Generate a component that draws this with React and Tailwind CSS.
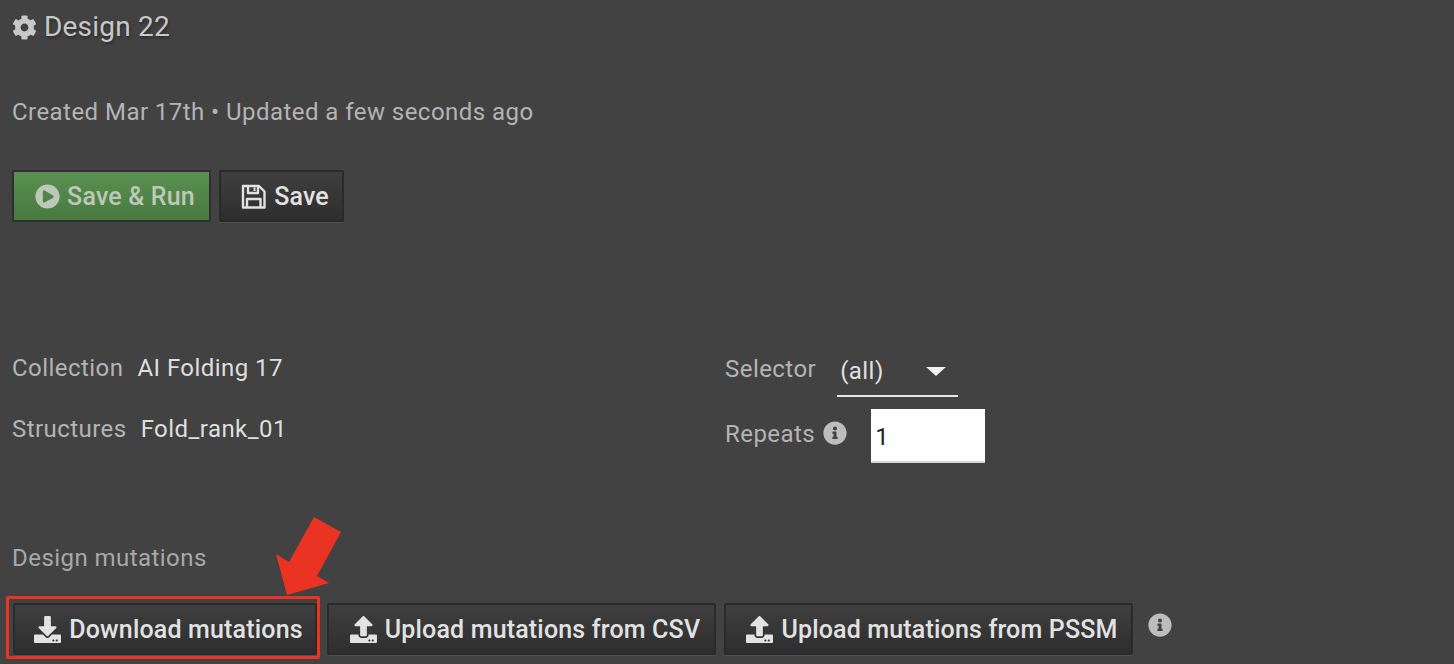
import React from 'react';
import { FaCog, FaPlayCircle, FaDownload, FaUpload, FaInfoCircle } from 'react-icons/fa';

const darkButton = 'flex h-[52px] items-center justify-center gap-2 rounded-[2px] border-2 border-[#2a2a2a] bg-gradient-to-b from-[#3f3f3f] to-[#2e2e2e] pl-[7px] text-[25px] font-medium tracking-[0.17px] text-[#e2e2e2] shadow-[0_1px_1px_rgba(255,255,255,0.08)]';

const Field = ({ label, children, className }) => (
  <div className={`flex items-center ${className}`}>
    <span className="text-[#b4b4b4]">{label}</span>
    {children}
  </div>
);

const SaveIcon = () => (
  <svg className="h-[25px] w-[25px]" viewBox="0 0 25 25" fill="none" stroke="currentColor" strokeWidth="2.4" strokeLinejoin="round">
    <path d="M2 2H18L23.5 7.5V23.5H2Z" />
    <path d="M7 2V9H17V2" />
    <path d="M6 23.5V15H19.5V23.5" />
    <path d="M13.5 3.5V7" strokeWidth="2" />
  </svg>
);

const App = () => {
  return (
    <div className="h-[664px] w-[1454px] overflow-hidden bg-[#424242] pl-3 font-['Roboto',sans-serif] text-[24px] leading-none tracking-[0.45px]">
      <h1 className="flex h-[54px] items-center gap-[7px] text-[28px] font-normal tracking-[0.2px] text-[#c8c8c8] [text-shadow:1px_2px_3px_rgba(0,0,0,0.35)]">
        <FaCog className="h-[25px] w-[25px]" />
        Design 22
      </h1>

      <p className="mt-[46px] text-[#b4b4b4]">Created Mar 17th • Updated a few seconds ago</p>

      <div className="mt-[46px] flex gap-2">
        <button className="flex h-[52px] w-[199px] items-center justify-center gap-[7px] rounded-[2px] border-2 border-[#2f2f2f] bg-gradient-to-b from-[#5a9152] to-[#49793f] pl-[7px] text-[25px] font-medium tracking-[0.17px] text-[#bcc9b8]">
          <FaPlayCircle className="h-[25px] w-[25px]" />
          Save &amp; Run
        </button>
        <button className={`${darkButton} w-[125px]`}>
          <SaveIcon />
          Save
        </button>
      </div>

      <div className="mt-[130px] grid grid-cols-[713px_1fr]">
        <div className="flex flex-col gap-[37px] pt-[4px]">
          <Field label="Collection">
            <span className="ml-[14px] text-[#dedede]">AI Folding 17</span>
          </Field>
          <Field label="Structures">
            <span className="ml-[14px] text-[#dedede]">Fold_rank_01</span>
          </Field>
        </div>
        <div className="flex flex-col gap-[19px]">
          <Field label="Selector" className="h-[34px]">
            <div className="ml-[21px] flex h-[50px] w-[121px] translate-y-[3px] items-center border-b-2 border-[#e6e6e6] pl-[3px] text-[#e0e0e0]">
              (all)
              <span className="ml-auto mr-[12px] h-0 w-0 border-x-[10px] border-t-[9px] border-x-transparent border-t-[#f0f0f0]" />
            </div>
          </Field>
          <Field label="Repeats">
            <FaInfoCircle className="ml-2 h-6 w-6 -translate-y-[1px] text-[#bdbdbd]" />
            <input
              readOnly
              value="1"
              className="ml-[24px] mt-[4px] h-[54px] w-[114px] border-b-2 border-[#d8d8d8] bg-white pl-[4px] pt-[3px] text-[24px] text-[#222]"
            />
          </Field>
        </div>
      </div>

      <p className="mt-[83px] text-[#a8a8a8]">Design mutations</p>

      <div className="relative mt-[26px] flex items-end">
        <div className="-ml-[6px] rounded-[2px] border-[3px] border-[#ea3323] pb-[1px] pl-[4px] pt-[4px]">
          <button className={`${darkButton} w-[304px]`}>
            <FaDownload className="h-[27px] w-[27px]" />
            Download mutations
          </button>
        </div>
        <button className={`${darkButton} mb-[4px] ml-[7px] w-[389px]`}>
          <FaUpload className="h-[27px] w-[27px]" />
          Upload mutations from CSV
        </button>
        <button className={`${darkButton} mb-[4px] ml-2 w-[409px]`}>
          <FaUpload className="h-[27px] w-[27px]" />
          Upload mutations from PSSM
        </button>
        <FaInfoCircle className="mb-[22px] ml-[15px] h-6 w-6 text-[#bdbdbd]" />
        <svg className="absolute left-[258px] top-[-86px] h-[90px] w-[80px]" viewBox="0 0 80 90">
          <path d="M44 7L71 22L47 66L59 73L17 85L6 44L19 52Z" fill="#ea3323" />
        </svg>
      </div>
    </div>
  );
};

export default App;
